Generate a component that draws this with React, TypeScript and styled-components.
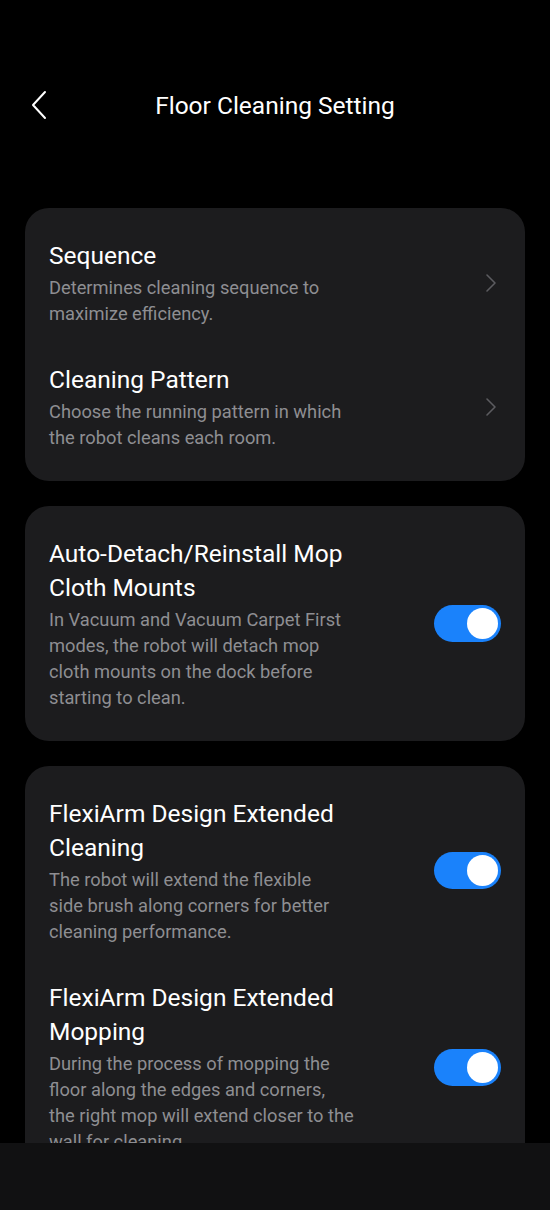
import React, { useState } from 'react';
import styled, { createGlobalStyle } from 'styled-components';

const GlobalStyle = createGlobalStyle`
  html, body {
    margin: 0;
    padding: 0;
    background: #000;
  }
  body {
    font-family: Roboto, "Noto Sans", Arial, sans-serif;
    -webkit-font-smoothing: antialiased;
  }
`;

const Page = styled.div`
  display: flex;
  flex-direction: column;
  width: 550px;
  height: 1210px;
  background: #000;
  overflow: hidden;
`;

const Header = styled.div`
  position: relative;
  display: flex;
  align-items: center;
  justify-content: center;
  height: 70px;
  margin-top: 70px;
  flex-shrink: 0;
`;

const BackButton = styled.button`
  position: absolute;
  left: 30px;
  top: 50%;
  transform: translateY(-50%);
  display: flex;
  padding: 0;
  border: none;
  background: none;
  cursor: pointer;
`;

const Title = styled.h1`
  margin: 0;
  font-size: 24.5px;
  font-weight: 400;
  color: #fff;
`;

const Content = styled.div`
  flex: 1;
  min-height: 0;
  overflow: hidden;
  padding: 68px 25px 0;
  display: flex;
  flex-direction: column;
  gap: 25px;
`;

const Card = styled.div`
  display: flex;
  flex-direction: column;
  background: #1c1c1e;
  border-radius: 24px;
  padding: 13px 0 12px;
  flex-shrink: 0;
`;

const Row = styled.div`
  display: flex;
  align-items: center;
  padding: 18px 24px;
  cursor: pointer;
`;

const TextBlock = styled.div`
  flex: 1;
  display: flex;
  flex-direction: column;
  white-space: nowrap;
`;

const Line = styled.span`
  display: block;
`;

const ItemTitle = styled.div`
  font-size: 24.5px;
  line-height: 34px;
  color: #fff;
`;

const ItemDesc = styled.div`
  margin-top: 2px;
  font-size: 18.3px;
  line-height: 26px;
  color: #8e8e92;
`;

const Chevron = styled.span`
  display: flex;
  margin-right: 4px;
`;

const Track = styled.button<{ $on: boolean }>`
  position: relative;
  flex-shrink: 0;
  width: 67px;
  height: 37px;
  margin-top: -2px;
  padding: 0;
  border: none;
  border-radius: 19px;
  background: ${(p) => (p.$on ? '#1a82fb' : '#3a3a3c')};
  cursor: pointer;
`;

const Knob = styled.span<{ $on: boolean }>`
  position: absolute;
  top: 3px;
  left: ${(p) => (p.$on ? '33px' : '3px')};
  width: 31px;
  height: 31px;
  border-radius: 50%;
  background: #fff;
  transition: left 0.2s ease;
`;

const BottomBar = styled.div`
  height: 67px;
  flex-shrink: 0;
  background: #111112;
`;

interface Item {
  id: string;
  title: string[];
  desc: string[];
  kind: 'link' | 'toggle';
}

const groups: Item[][] = [
  [
    {
      id: 'sequence',
      title: ['Sequence'],
      desc: ['Determines cleaning sequence to', 'maximize efficiency.'],
      kind: 'link',
    },
    {
      id: 'pattern',
      title: ['Cleaning Pattern'],
      desc: ['Choose the running pattern in which', 'the robot cleans each room.'],
      kind: 'link',
    },
  ],
  [
    {
      id: 'detach',
      title: ['Auto-Detach/Reinstall Mop', 'Cloth Mounts'],
      desc: [
        'In Vacuum and Vacuum Carpet First',
        'modes, the robot will detach mop',
        'cloth mounts on the dock before',
        'starting to clean.',
      ],
      kind: 'toggle',
    },
  ],
  [
    {
      id: 'flexiClean',
      title: ['FlexiArm Design Extended', 'Cleaning'],
      desc: [
        'The robot will extend the flexible',
        'side brush along corners for better',
        'cleaning performance.',
      ],
      kind: 'toggle',
    },
    {
      id: 'flexiMop',
      title: ['FlexiArm Design Extended', 'Mopping'],
      desc: [
        'During the process of mopping the',
        'floor along the edges and corners,',
        'the right mop will extend closer to the',
        'wall for cleaning.',
      ],
      kind: 'toggle',
    },
  ],
];

const App: React.FC = () => {
  const [toggles, setToggles] = useState<{ [key: string]: boolean }>({
    detach: true,
    flexiClean: true,
    flexiMop: true,
  });

  const onToggle = (id: string) => () => {
    setToggles({ ...toggles, [id]: !toggles[id] });
  };

  return (
    <Page>
      <GlobalStyle />
      <Header>
        <BackButton aria-label="Back">
          <svg width="18" height="30" viewBox="0 0 18 30">
            <polyline points="15,2 3,15 15,28" fill="none" stroke="#fff" strokeWidth="2" strokeLinecap="round" strokeLinejoin="round" />
          </svg>
        </BackButton>
        <Title>Floor Cleaning Setting</Title>
      </Header>
      <Content>
        {groups.map((group, i) => (
          <Card key={i}>
            {group.map((item) => (
              <Row key={item.id}>
                <TextBlock>
                  <ItemTitle>
                    {item.title.map((l) => <Line key={l}>{l}</Line>)}
                  </ItemTitle>
                  <ItemDesc>
                    {item.desc.map((l) => <Line key={l}>{l}</Line>)}
                  </ItemDesc>
                </TextBlock>
                {item.kind === 'link' ? (
                  <Chevron>
                    <svg width="12" height="20" viewBox="0 0 12 20">
                      <polyline points="2,2 10,10 2,18" fill="none" stroke="#5c5c60" strokeWidth="1.6" strokeLinecap="round" strokeLinejoin="round" />
                    </svg>
                  </Chevron>
                ) : (
                  <Track $on={toggles[item.id]} onClick={onToggle(item.id)}>
                    <Knob $on={toggles[item.id]} />
                  </Track>
                )}
              </Row>
            ))}
          </Card>
        ))}
      </Content>
      <BottomBar />
    </Page>
  );
};

export default App;
